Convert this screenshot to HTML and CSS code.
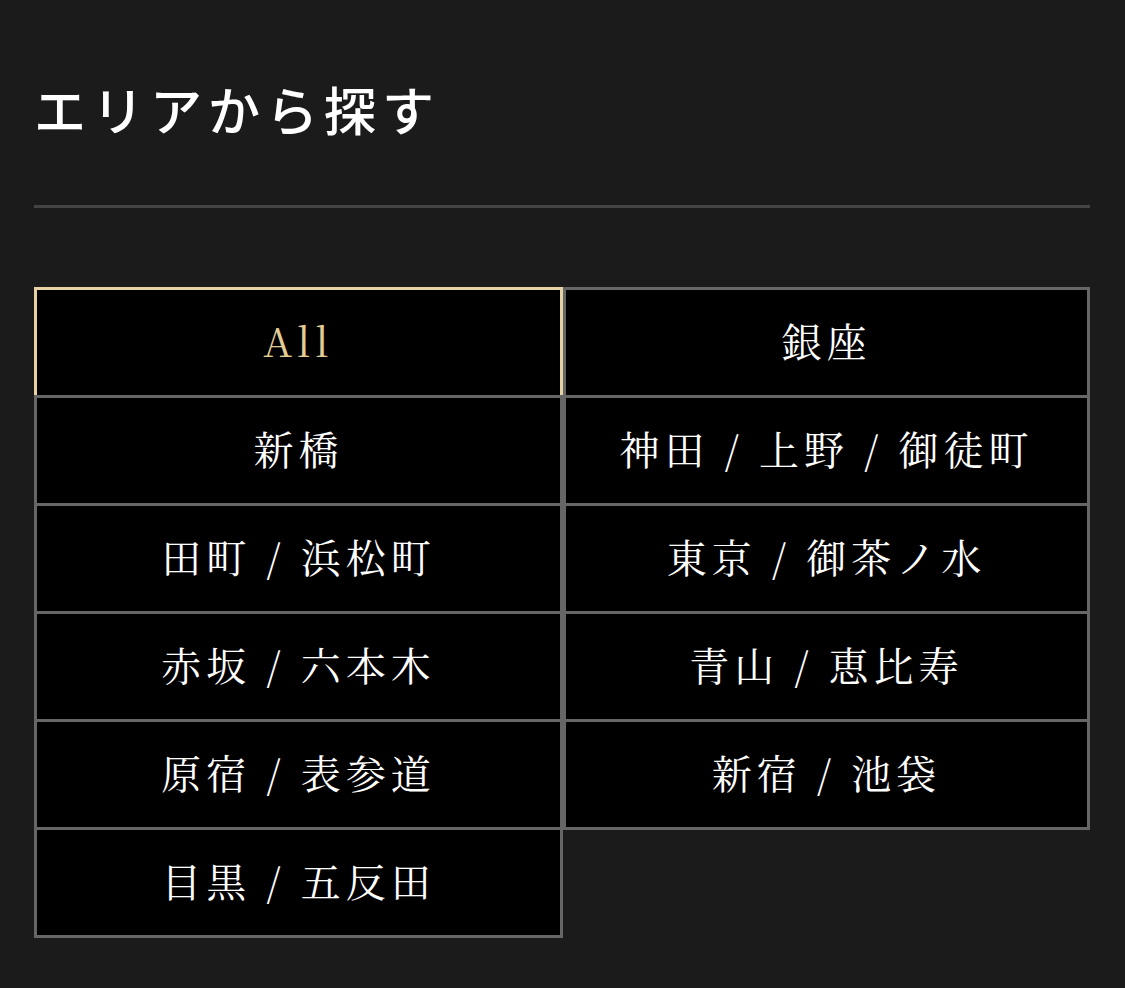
FILE: index.html
```html
<!DOCTYPE html>
<html lang="ja">
<head>
<meta charset="utf-8">
<title>エリアから探す</title>
<link rel="stylesheet" href="styles.css">
</head>
<body>
<main class="page">
  <h2 class="title">エリアから探す</h2>
  <hr class="divider">
  <ul class="areas">
    <li class="area area--active"><a href="#">All</a></li>
    <li class="area"><a href="#">銀座</a></li>
    <li class="area"><a href="#">新橋</a></li>
    <li class="area"><a href="#">神田 / 上野 / 御徒町</a></li>
    <li class="area"><a href="#">田町 / 浜松町</a></li>
    <li class="area"><a href="#">東京 / 御茶ノ水</a></li>
    <li class="area"><a href="#">赤坂 / 六本木</a></li>
    <li class="area"><a href="#">青山 / 恵比寿</a></li>
    <li class="area"><a href="#">原宿 / 表参道</a></li>
    <li class="area"><a href="#">新宿 / 池袋</a></li>
    <li class="area"><a href="#">目黒 / 五反田</a></li>
  </ul>
</main>
</body>
</html>
```

FILE: styles.css
```css
html, body {
  margin: 0;
  padding: 0;
  background: #1b1b1b;
}

.page {
  padding: 79px 35px 0 34px;
}

.title {
  margin: 0;
  font-family: "Noto Sans CJK JP", "Noto Sans", sans-serif;
  font-size: 52px;
  line-height: 60px;
  font-weight: 500;
  letter-spacing: 6px;
  color: #ffffff;
}

.divider {
  margin: 66px 0 0 0;
  border: 0;
  height: 3px;
  background: #444444;
}

.areas {
  list-style: none;
  margin: 79px 0 0 0;
  padding: 3px 0 0 0;
  display: grid;
  grid-template-columns: 529px 527px;
  grid-auto-rows: 108px;
}

.area {
  margin-top: -3px;
  border: 3px solid #666666;
  background: #000000;
  display: flex;
}

.area a {
  flex: 1;
  display: flex;
  align-items: center;
  justify-content: center;
  padding-bottom: 6px;
  text-decoration: none;
  color: #ffffff;
  font-family: "Noto Serif CJK JP", "Liberation Serif", "Noto Sans CJK JP", serif;
  font-size: 40px;
  font-weight: 400;
  letter-spacing: 5px;
  white-space: pre;
}

.area--active {
  border-color: #e6d2a2;
}

.area--active a {
  color: #e3cc96;
}
```
